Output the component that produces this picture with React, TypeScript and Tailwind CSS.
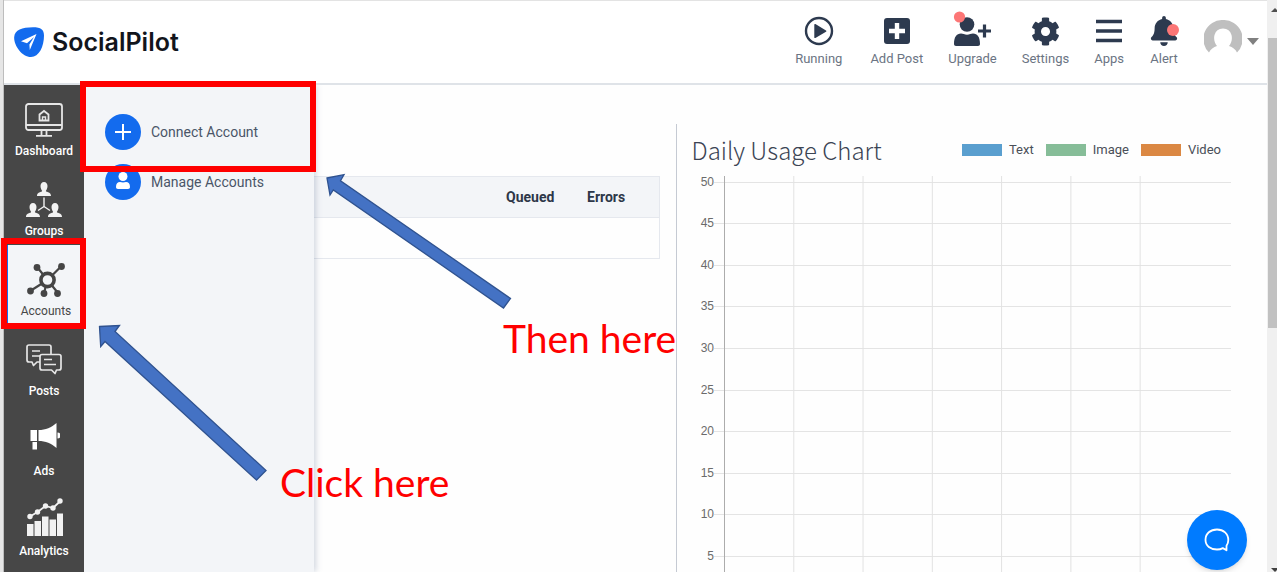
import type { ReactNode } from "react";
import { FaBell, FaCog } from "react-icons/fa";

function LogoMark() {
  return (
    <svg width="30" height="30" viewBox="0 0 30 30" aria-hidden="true">
      <path d="M.2 10C.8 3 8 .2 19 .2c8 0 11 2.300 11 8.300 0 11-5 21.500-13 21.500C8 30-.5 18 .2 10Z" fill="#136bee" />
      <path d="M22.500 7 7 14.200l6 2L20 10l-4.600 7.400.4 5.600Z" fill="#fff" />
    </svg>
  );
}

function RunningIcon() {
  return (
    <svg width="30" height="30" viewBox="0 0 30 30" aria-hidden="true">
      <circle cx="15" cy="15" r="13" fill="none" stroke="#2d3a4f" strokeWidth="2.400" />
      <path d="M10.300 8.600v12.800c0 .6.6.9 1.100.6l10.600-6.300c.5-.3.5-1 0-1.300L11.400 8c-.5-.3-1.100 0-1.100.6Z" fill="#2d3a4f" />
    </svg>
  );
}

function AddPostIcon() {
  return (
    <svg width="26" height="26" viewBox="0 0 26 26" aria-hidden="true">
      <rect width="26" height="26" rx="3" fill="#2d3a4f" />
      <path d="M10.800 5h4.400v5.800H21v4.400h-5.800V21h-4.400v-5.800H5v-4.400h5.800Z" fill="#fff" />
    </svg>
  );
}

function UpgradeIcon() {
  return (
    <svg width="38" height="40" viewBox="0 0 38 40" className="shrink-0" aria-hidden="true">
      <circle cx="14" cy="13.500" r="7.300" fill="#2d3a4f" />
      <path d="M1 33c0-7 2.500-10.500 7-10.500 2 0 3.500 1.200 6 1.200s4-1.200 6-1.200c4.500 0 7 3.500 7 10.500 0 1.200-.8 2-2 2H3c-1.200 0-2-.8-2-2Z" fill="#2d3a4f" />
      <path d="M31.500 13.500v13M25 20h13" stroke="#2d3a4f" strokeWidth="3.200" />
      <circle cx="6.500" cy="6" r="5.600" fill="#fc7676" />
    </svg>
  );
}

function AppsIcon() {
  return (
    <svg width="26" height="24" viewBox="0 0 26 24" aria-hidden="true">
      <path d="M0 2.500h26M0 12h26M0 21.500h26" stroke="#2d3a4f" strokeWidth="3.600" />
    </svg>
  );
}

function AlertIcon() {
  return (
    <span className="relative flex">
      <FaBell size={30} color="#2d3a4f" />
      <span className="absolute top-2 right-0 size-3 rounded-full bg-[#fc7676]" />
    </span>
  );
}

function Avatar() {
  return (
    <svg width="38" height="42" viewBox="0 0 38 42" aria-hidden="true">
      <path d="M19 0A19 19 0 0 0 5 32.500c1.500-3 4.500-5.500 8-6.500-2.500-3-3.500-7-2.500-11a8.800 8.800 0 0 1 17 0c1 4 0 8-2.500 11 3.500 1 6.500 3.500 8 6.500A19 19 0 0 0 19 0Z" fill="#bfbfbf" />
    </svg>
  );
}

function DashboardIcon() {
  return (
    <svg width="38" height="34" viewBox="0 0 38 34" fill="none" stroke="#e6e6e6" strokeWidth="1.800" aria-hidden="true">
      <rect x="1" y="1" width="36" height="26" rx="2.500" />
      <path d="M1 22h36M16.500 27v5M21.500 27v5M11 32.800h16" />
      <path d="M14.500 17.500h9v-6L19 8l-4.500 3.500Z" />
      <path d="M17.500 17v-3h3v3" strokeWidth="1.400" />
    </svg>
  );
}

function GroupPerson({ x, y }: { x: number; y: number }) {
  return (
    <g transform={`translate(${x} ${y})`}>
      <path d="M-3.500-10c0-2.300 1.300-4 3.500-4s3.500 1.700 3.500 4c0 2.200-.9 3.800-1.600 4.800L2-4.500c3 1 5 1.500 5 4.500H-7c0-3 2-3.500 5-4.500l.1-.7C-2.600-6.200-3.500-7.800-3.500-10Z" fill="#f2f2f2" />
    </g>
  );
}

function GroupsIcon() {
  return (
    <svg width="36" height="36" viewBox="0 0 36 36" aria-hidden="true">
      <path d="M18 15.500v9M18 24.500l-6 4M18 24.500l6 4" stroke="#f2f2f2" strokeWidth="1.400" />
      <GroupPerson x={18} y={14} />
      <GroupPerson x={7} y={35} />
      <GroupPerson x={29} y={35} />
    </svg>
  );
}

function AccountsIcon() {
  return (
    <svg width="38" height="34" viewBox="0 0 38 34" fill="#454545" stroke="#454545" aria-hidden="true">
      <path d="m20.500 17-10-12.500M20.500 17 34 3.500M20.500 17 4 27.500M20.500 17l-3.500 13M20.500 17 31 30" strokeWidth="2.200" />
      <circle cx="20.500" cy="17" r="6.600" fill="#f3f5f8" strokeWidth="3.600" />
      <g stroke="none">
        <circle cx="10" cy="4.500" r="3.400" />
        <circle cx="34.500" cy="3.500" r="3.400" />
        <circle cx="3.500" cy="28" r="3.400" />
        <circle cx="17" cy="30.500" r="3.400" />
        <circle cx="30.500" cy="30.500" r="3.400" />
      </g>
    </svg>
  );
}

function PostsIcon() {
  return (
    <svg width="36" height="32" viewBox="0 0 36 32" fill="none" stroke="#e6e6e6" strokeWidth="1.700" strokeLinejoin="round" aria-hidden="true">
      <path d="M14 18h-3l-3.500 3.500L6 18H3c-1.300 0-2-.8-2-2V3c0-1.300.8-2 2-2h20c1.300 0 2 .8 2 2v7" />
      <path d="M16 10.500h17c1.300 0 2 .8 2 2V24c0 1.300-.8 2-2 2h-2.500l-1.500 3.500L25.500 26H16c-1.300 0-2-.8-2-2V12.500c0-1.300.8-2 2-2Z" />
      <path d="M6 7h8M6 12h8M18 15.500h8M18 20.500h12" />
    </svg>
  );
}

function AdsIcon() {
  return (
    <svg width="32" height="36" viewBox="0 0 32 36" fill="#fff" aria-hidden="true">
      <path d="M2.500 8H9v11H2.500ZM10.500 8c7 0 13-2.500 18-7v25c-5-4.500-11-7-18-7ZM4.500 20H9v7.500H4.500ZM29.500 10.500a3 3 0 0 1 0 6Z" />
    </svg>
  );
}

function AnalyticsIcon() {
  return (
    <svg width="38" height="44" viewBox="-2 0 38 44" fill="#f2f2f2" aria-hidden="true">
      <path d="M0 26h6.500v12H0ZM7.500 23H14v15H7.500ZM15 18.500h6.500V38H15ZM22.500 21.500H29V38h-6.500ZM30 15.500h6V38h-6Z" />
      <path d="m3 18.500 7.500-4.500 8-6 7.500 2 7.500-7" fill="none" stroke="#f2f2f2" strokeWidth="1.800" />
      <circle cx="3" cy="18.500" r="2.700" />
      <circle cx="10.500" cy="14" r="2.700" />
      <circle cx="18.500" cy="8" r="2.700" />
      <circle cx="26" cy="10" r="2.700" />
      <circle cx="33" cy="3" r="2.700" />
    </svg>
  );
}

function PlusBadge() {
  return (
    <svg width="36" height="36" viewBox="0 0 36 36" aria-hidden="true">
      <circle cx="18" cy="18" r="18" fill="#136bee" />
      <path d="M18 10v16M10 18h16" stroke="#fff" strokeWidth="2" />
    </svg>
  );
}

function PersonBadge() {
  return (
    <svg width="36" height="36" viewBox="0 0 36 36" aria-hidden="true">
      <circle cx="18" cy="18" r="18" fill="#136bee" />
      <circle cx="18" cy="12.500" r="4.500" fill="#fff" />
      <path d="M11 23c0-3.500 1.500-5 4-5 1 0 2 .5 3 .5s2-.5 3-.5c2.500 0 4 1.500 4 5 0 1.200-.7 2-2 2H13c-1.300 0-2-.8-2-2Z" fill="#fff" />
    </svg>
  );
}

type Item = { label: string; icon: ReactNode; active?: boolean };

const postItems: Item[] = [
  { label: "Running", icon: <RunningIcon /> },
  { label: "Add Post", icon: <AddPostIcon /> },
];

const toolItems: Item[] = [
  { label: "Upgrade", icon: <UpgradeIcon /> },
  { label: "Settings", icon: <FaCog size={29} color="#2d3a4f" /> },
  { label: "Apps", icon: <AppsIcon /> },
  { label: "Alert", icon: <AlertIcon /> },
];

const sideItems: Item[] = [
  { label: "Dashboard", icon: <DashboardIcon /> },
  { label: "Groups", icon: <GroupsIcon /> },
  { label: "Accounts", icon: <AccountsIcon />, active: true },
  { label: "Posts", icon: <PostsIcon /> },
  { label: "Ads", icon: <AdsIcon /> },
  { label: "Analytics", icon: <AnalyticsIcon /> },
];

function NavButton({ label, icon }: Item) {
  return (
    <button type="button" className="flex flex-col items-center gap-1 text-[13px] leading-4 text-[#6b7483]">
      <span className="flex h-8 items-center justify-center">{icon}</span>
      {label}
    </button>
  );
}

function Header() {
  return (
    <header className="flex h-[85px] shrink-0 items-center justify-between border-t border-b-2 border-t-[#e3e3e3] border-b-[#dfe3e8] bg-white pr-2 pl-[10px]">
      <a href="#home" className="flex items-center gap-2">
        <LogoMark />
        <span className="font-[Inter,sans-serif] text-[25px] leading-8 font-semibold text-[#12151c]">SocialPilot</span>
      </a>
      <nav className="flex items-center gap-[25px] pb-0.5">
        <div className="flex items-center gap-7">
          {postItems.map((item) => (
            <NavButton key={item.label} {...item} />
          ))}
        </div>
        {toolItems.map((item) => (
          <NavButton key={item.label} {...item} />
        ))}
        <button type="button" aria-label="Profile" className="flex items-center gap-[5px]">
          <Avatar />
          <svg width="12" height="7" viewBox="0 0 12 7" aria-hidden="true">
            <path d="M0 0h12L6 7Z" fill="#808080" />
          </svg>
        </button>
      </nav>
    </header>
  );
}

function Sidebar() {
  return (
    <nav className="flex w-20 shrink-0 flex-col bg-[#474747]">
      {sideItems.map((item) => (
        <a
          key={item.label}
          href={`#${item.label.toLowerCase()}`}
          className={
            item.active
              ? "flex h-20 shrink-0 flex-col items-center justify-end border-l-4 border-[#136bee] bg-[#f3f5f8] pb-1.5 text-xs text-[#474747]"
              : "flex h-20 shrink-0 flex-col items-center justify-end pb-1.5 text-xs font-medium text-white"
          }
        >
          <span className="flex h-[46px] items-center">{item.icon}</span>
          {item.label}
        </a>
      ))}
    </nav>
  );
}

function AccountsMenu() {
  return (
    <div className="absolute inset-y-0 left-0 flex w-[230px] flex-col gap-3.5 bg-[#f3f5f8] px-[21px] pt-[29px] text-sm text-[#4a5568] shadow-[2px_0_6px_rgba(74,96,130,0.25)]">
      <a href="#connect" className="flex items-center gap-2.5">
        <PlusBadge />
        Connect Account
      </a>
      <a href="#manage" className="flex items-center gap-2.5">
        <PersonBadge />
        Manage Accounts
      </a>
    </div>
  );
}

function QueueTable() {
  return (
    <table className="w-full border border-[#e5e8ee] text-left text-sm text-[#2d3748]">
      <thead>
        <tr className="h-[41px] border-b border-[#e5e8ee] bg-[#f3f5f8]">
          <th scope="col" aria-label="Account" />
          <th scope="col" className="w-[81px] font-bold">Queued</th>
          <th scope="col" className="w-[72px] font-bold">Errors</th>
        </tr>
      </thead>
      <tbody>
        <tr className="h-[41px]">
          <td />
          <td />
          <td />
        </tr>
      </tbody>
    </table>
  );
}

const ticks = [50, 45, 40, 35, 30, 25, 20, 15, 10, 5];
const columns = [1, 2, 3, 4, 5, 6];
const tickStep = 41.6;
const columnStep = 13.65;

function UsageChart() {
  return (
    <section className="min-w-0 flex-1 border-l border-[#c5cad3] pl-[15px]">
      <div className="flex h-[52px] items-center justify-between pr-[46px]">
        <h2 className="font-['Noto_Sans_CJK_SC',sans-serif] text-2xl leading-8 font-light text-[#3b4454]">Daily Usage Chart</h2>
        <ul className="flex gap-3 text-[13px] leading-4 text-[#4a4f58]">
          <li className="flex items-center gap-[7px]"><span className="h-3 w-10 bg-[#5a9fcf]" />Text</li>
          <li className="flex items-center gap-[7px]"><span className="h-3 w-10 bg-[#86bd98]" />Image</li>
          <li className="flex items-center gap-[7px]"><span className="h-3 w-10 bg-[#db8843]" />Video</li>
        </ul>
      </div>
      <div className="mr-9 flex h-[430px]">
        <svg width="22" height="430" aria-hidden="true" className="shrink-0 font-['Liberation_Sans',sans-serif] text-xs">
          {ticks.map((tick, i) => (
            <text key={tick} x="22" y={9.5 + i * tickStep} textAnchor="end" fill="#6b6b6b">{tick}</text>
          ))}
        </svg>
        <svg width="10" height="430" className="shrink-0" aria-hidden="true">
          {ticks.map((tick, i) => (
            <rect key={tick} x="0" y={Math.round(5.5 + i * tickStep)} width="10" height="1" fill="#e4e4e4" />
          ))}
        </svg>
        <svg width="100%" height="430" className="min-w-0 flex-1" role="img" aria-label="Daily usage grid">
          {ticks.map((tick, i) => (
            <rect key={tick} x="0" y={Math.round(5.5 + i * tickStep)} width="100%" height="1" fill="#e4e4e4" />
          ))}
          {columns.map((column) => (
            <rect key={column} x={`${column * columnStep}%`} y="0" width="1" height="430" fill="#e2e2e2" />
          ))}
          <rect x="0" y="0" width="1" height="430" fill="#acacac" />
        </svg>
      </div>
    </section>
  );
}

function Scrollbar() {
  return (
    <div className="flex w-2.5 shrink-0 flex-col items-center justify-between overflow-hidden bg-[#f0f0f0] pl-px" aria-hidden="true">
      <div className="flex w-full flex-col items-end">
        <svg width="6" height="38" viewBox="0 0 6 38"><path d="M0 12 4 8l4 4Z" fill="#505050" /></svg>
        <div className="h-[290px] w-full bg-[#c1c1c1]" />
      </div>
      <svg width="9" height="4" viewBox="0 0 9 4"><path d="M3 0h8L7 4Z" fill="#404040" /></svg>
    </div>
  );
}

function Annotations() {
  return (
    <div className="pointer-events-none absolute inset-0 font-[Lato,sans-serif] text-[39px] leading-[48px] text-[#ff0000]">
      <div className="absolute top-[81px] left-20 h-[91px] w-[236px] border-6 border-[#ff0000]" />
      <div className="absolute top-[238px] left-px h-[91px] w-[85px] border-6 border-[#ff0000]" />
      <svg className="absolute inset-0" width="100%" height="100%" fill="#4472c4" stroke="#2f528f" strokeWidth="1.300" aria-hidden="true">
        <path d="M327 178l17-3.300-3.500 6L510.500 298.500 503.500 308 333.300 190l-3.300 5Z" />
        <path d="M99.500 326.500l20-1-4.500 6L266 470.500 256.500 480 105 341.500l-4.300 5Z" />
      </svg>
      <p className="absolute top-[314px] left-[503px] whitespace-nowrap">Then here</p>
      <p className="absolute top-[458px] left-[280px] whitespace-nowrap">Click here</p>
    </div>
  );
}

export default function App() {
  return (
    <div className="relative flex h-screen overflow-hidden bg-white font-[Roboto,sans-serif]">
      <div className="w-1 shrink-0 border-r border-[#bdbdbd] bg-[#e6e6e6]" />
      <div className="flex min-w-0 flex-1 flex-col">
        <Header />
        <div className="flex min-h-0 flex-1">
          <Sidebar />
          <main className="relative flex min-w-0 flex-1 overflow-hidden bg-[#fefefe] pt-[39px]">
            <div className="w-1/2 shrink-0 pt-[52px] pr-4">
              <QueueTable />
            </div>
            <UsageChart />
            <AccountsMenu />
          </main>
        </div>
      </div>
      <Scrollbar />
      <button type="button" aria-label="Open chat" className="absolute right-[30px] bottom-0.5 flex size-15 items-center justify-center rounded-full bg-[#007bff] shadow-md">
        <svg width="26" height="24" viewBox="0 0 26 24" fill="none" stroke="#fff" strokeWidth="1.800" strokeLinejoin="round" aria-hidden="true">
          <path d="M22.500 22.200v-4.400c1.200-1.700 1.800-3.600 1.800-5.900C24.300 5.500 19.500 1.500 13 1.500S1.500 5.500 1.500 11.800 6.500 21.500 13 21.500c2.300 0 4.200-.5 5.800-1.400Z" />
        </svg>
      </button>
      <Annotations />
    </div>
  );
}
